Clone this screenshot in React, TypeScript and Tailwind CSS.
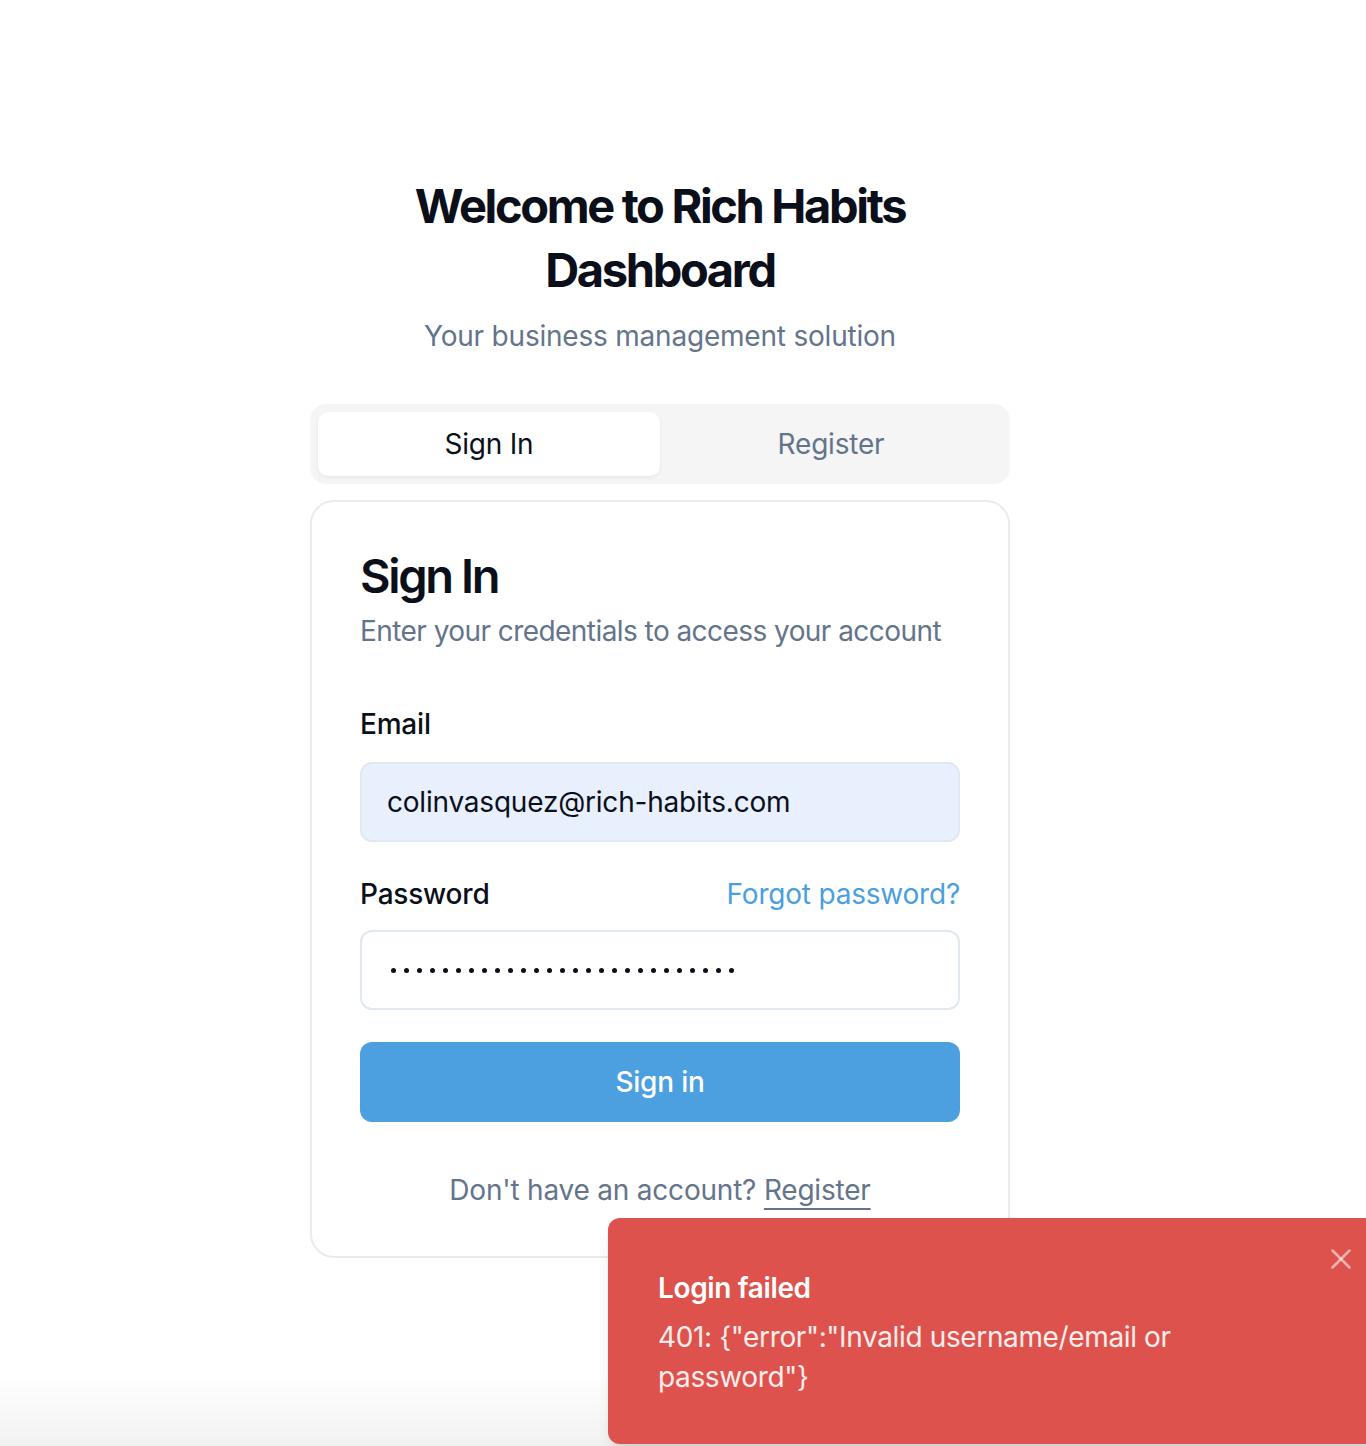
import React from 'react';
import { X } from 'lucide-react';

const ERROR_TEXT = '401: {"error":"Invalid username/email or password"}';

function PasswordDots({ count }: { count: number }) {
  return (
    <div className="flex items-center gap-[8px]">
      {Array.from({ length: count }).map((_, i) => (
        <span key={i} className="block h-[5px] w-[5px] rounded-full bg-[#0b0f1a]" />
      ))}
    </div>
  );
}

function Toast() {
  return (
    <div className="absolute left-[608px] top-[1218px] w-[800px] h-[226px] rounded-[12px] bg-[#dd524c] shadow-lg">
      <div className="pl-[50px] pt-[50px]">
        <div className="text-[28px] leading-[40px] font-semibold tracking-[-0.013em] text-white">Login failed</div>
        <div className="mt-[9px] w-[560px] text-[28px] leading-[40px] tracking-[-0.013em] text-white/90">
          {ERROR_TEXT}
        </div>
      </div>
      <button className="absolute left-[716px] top-[24px] text-white/55">
        <X size={34} strokeWidth={1.8} />
      </button>
    </div>
  );
}

export default function App() {
  return (
    <div className="relative min-h-[1446px] w-full overflow-hidden bg-[linear-gradient(to_bottom,#ffffff_0%,#ffffff_95%,#f2f2f2_100%)] font-['Inter',sans-serif] tracking-[-0.013em] text-[#0b0f1a]">
      <div className="w-[1320px]">
        <div className="mx-auto w-[700px] pt-[174px]">
          <div className="text-center">
            <h1 className="mx-auto w-[560px] text-[47px] leading-[64px] font-bold tracking-[-0.05em] text-[#0b0f1a]">
              Welcome to Rich Habits Dashboard
            </h1>
            <p className="mt-[14px] text-[28px] leading-[40px] text-[#64748b]">
              Your business management solution
            </p>
          </div>

          <div className="mt-[48px] grid grid-cols-2 rounded-[16px] bg-[#f5f5f5] p-[8px]">
            <div className="flex h-[64px] items-center justify-center rounded-[10px] bg-white text-[28px] text-[#0b0f1a] shadow-[0_2px_4px_rgba(0,0,0,0.06)]">
              Sign In
            </div>
            <div className="flex h-[64px] items-center justify-center text-[28px] text-[#64748b]">
              Register
            </div>
          </div>

          <div className="mt-[16px] rounded-[24px] border-2 border-[#e8ebf0] bg-white px-[48px] pt-[46px] pb-[46px]">
            <h2 className="text-[47px] leading-[56px] font-semibold tracking-[-0.05em] text-[#0b0f1a]">Sign In</h2>
            <p className="mt-[7px] text-[28px] leading-[40px] tracking-[-0.02em] text-[#64748b]">
              Enter your credentials to access your account
            </p>

            <label className="mt-[53px] block text-[28px] leading-[40px] font-medium text-[#0b0f1a]">Email</label>
            <div className="mt-[18px] flex h-[80px] items-center rounded-[12px] border-2 border-[#e2e8f0] bg-[#e8f0fe] px-[25px] text-[28px] text-[#0b0f1a]">
              colinvasquez@rich-habits.com
            </div>

            <div className="mt-[32px] flex items-center justify-between">
              <label className="text-[28px] leading-[40px] font-medium text-[#0b0f1a]">Password</label>
              <a className="text-[28px] leading-[40px] text-[#4a9fe0]">Forgot password?</a>
            </div>
            <div className="mt-[16px] flex h-[80px] items-center rounded-[12px] border-2 border-[#e2e8f0] bg-white px-[29px]">
              <PasswordDots count={27} />
            </div>

            <button className="mt-[32px] flex h-[80px] w-full items-center justify-center rounded-[12px] bg-[#4ca0e0] text-[28px] font-medium text-white">
              Sign in
            </button>

            <p className="mt-[48px] text-center text-[28px] leading-[40px] text-[#64748b]">
              Don't have an account?{' '}
              <span className="underline decoration-2 underline-offset-[8px]">Register</span>
            </p>
          </div>
        </div>
      </div>

      <Toast />
    </div>
  );
}
